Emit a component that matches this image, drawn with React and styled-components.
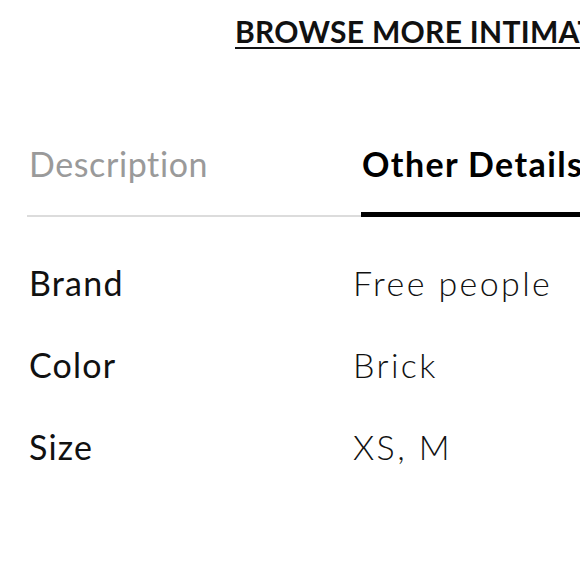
import React from 'react';
import styled, { createGlobalStyle } from 'styled-components';

const GlobalStyle = createGlobalStyle`
  html, body {
    margin: 0;
    padding: 0;
    background: #fff;
  }
  body {
    width: 580px;
    height: 580px;
    overflow: hidden;
    font-family: Lato, "Noto Sans", sans-serif;
    color: #111;
  }
`;

const details = [
  { label: 'Brand', value: 'Free people' },
  { label: 'Color', value: 'Brick' },
  { label: 'Size', value: 'XS, M' },
];

export default function App() {
  return (
    <>
      <GlobalStyle />
      <Page>
        <BrowseLink href="#">BROWSE MORE INTIMATES</BrowseLink>
        <Tabs>
          <Tab>Description</Tab>
          <Tab active>Other Details</Tab>
        </Tabs>
        <DetailList>
          {details.map((d) => (
            <DetailRow key={d.label}>
              <Label>{d.label}</Label>
              <Value>{d.value}</Value>
            </DetailRow>
          ))}
        </DetailList>
      </Page>
    </>
  );
}

// Style Components

const Page = styled.div`
  width: 668px;
  padding: 0 0 0 27px;
  display: flex;
  flex-direction: column;
`;

const BrowseLink = styled.a`
  display: block;
  margin: 13px 0 0 208px;
  font-size: 30px;
  line-height: 36px;
  font-weight: 700;
  letter-spacing: 0.3px;
  color: #111;
  white-space: nowrap;
  text-decoration: underline;
  text-underline-offset: 4px;
  text-decoration-thickness: 2px;
`;

const Tabs = styled.div`
  display: grid;
  grid-template-columns: 334px 334px;
  margin-top: 95px;
`;

const Tab = styled.div`
  font-size: 34px;
  line-height: 40px;
  padding-bottom: ${(p) => (p.active ? '28px' : '31px')};
  padding-left: ${(p) => (p.active ? '1px' : '2px')};
  white-space: nowrap;
  font-weight: ${(p) => (p.active ? 700 : 400)};
  letter-spacing: ${(p) => (p.active ? '1.4px' : '0.6px')};
  color: ${(p) => (p.active ? '#000' : '#9a9a9a')};
  border-bottom: ${(p) => (p.active ? '5px solid #000' : '2px solid #dcdcdc')};
  align-self: end;
`;

const DetailList = styled.div`
  display: flex;
  flex-direction: column;
  gap: 42px;
  margin-top: 46px;
`;

const DetailRow = styled.div`
  display: grid;
  grid-template-columns: 326px 1fr;
  font-size: 34px;
  line-height: 40px;
`;

const Label = styled.div`
  padding-left: 2px;
  font-weight: 400;
  letter-spacing: 1.2px;
  color: #111;
`;

const Value = styled.div`
  font-weight: 300;
  letter-spacing: 2.4px;
  color: #111;
`;
